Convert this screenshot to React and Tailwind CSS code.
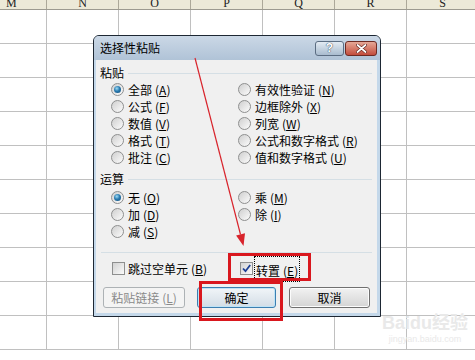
import React from "react";

const CJK = { fontFamily: '"Noto Sans CJK SC", "Noto Sans", sans-serif' };

const cols = [
  { w: 47, l: "M", left: true },
  { w: 72, l: "N" },
  { w: 72, l: "O" },
  { w: 72, l: "P" },
  { w: 72, l: "Q" },
  { w: 72, l: "R" },
  { w: 72, l: "S" },
];

function Sheet() {
  const rows = Array.from({ length: 10 });
  return (
    <div className="flex w-[475px] flex-col overflow-hidden">
      <div className="flex h-[10px] shrink-0 border-b border-[#9c9a90] bg-[#ece9d8]">
        {cols.map((c, i) => (
          <div
            key={i}
            style={{ width: c.w }}
            className={`flex shrink-0 items-end overflow-hidden border-r border-[#aca899] ${c.left ? "justify-start pl-[6px]" : "justify-center"}`}
          >
            <span className="text-[12px] leading-[11px] text-[#222]" style={{ fontFamily: '"Liberation Serif", serif' }}>
              {c.l}
            </span>
          </div>
        ))}
      </div>
      {rows.map((_, r) => (
        <div key={r} className="flex h-[34px] shrink-0 border-b border-[#c0c0c0]">
          {cols.map((c, i) => (
            <div key={i} style={{ width: c.w }} className="shrink-0 border-r border-[#c0c0c0]" />
          ))}
        </div>
      ))}
    </div>
  );
}

function Radio({ checked }) {
  return (
    <span className="flex h-[13px] w-[13px] shrink-0 items-center justify-center rounded-full border border-[#8e8f8f] bg-linear-to-br from-[#cfcfcf] to-[#fcfcfc]">
      {checked && (
        <span className="h-[7px] w-[7px] rounded-full bg-[radial-gradient(circle_at_40%_35%,#9edcf5_0%,#2a7bb0_45%,#0f4a78_100%)]" />
      )}
    </span>
  );
}

function Check({ checked }) {
  return (
    <span className="flex h-[13px] w-[13px] shrink-0 items-center justify-center border border-[#8e8f8f] bg-linear-to-br from-[#d2d2d2] to-[#fbfbfb]">
      {checked && (
        <svg width="11" height="11" viewBox="0 0 11 11">
          <path d="M2 5.5 L4.5 8.2 L9.2 2" fill="none" stroke="#1c3f95" strokeWidth="1.8" />
        </svg>
      )}
    </span>
  );
}

function Lab({ t, k }) {
  return (
    <span className="whitespace-nowrap text-[12px] leading-[14px] text-black">
      {t}
      <span className="ml-[3px]">
        (<span className="underline underline-offset-1">{k}</span>)
      </span>
    </span>
  );
}

function Opt({ t, k, checked }) {
  return (
    <div className="flex h-[17px] items-center gap-[4px]">
      <Radio checked={checked} />
      <Lab t={t} k={k} />
    </div>
  );
}

function GroupLabel({ t }) {
  return (
    <div className="flex items-center pl-[4px]">
      <span className="text-[12px] leading-[14px] text-black">{t}</span>
      <div className="ml-[4px] mr-[5px] h-px flex-1 bg-[#d5dfe5]" />
    </div>
  );
}

function Btn({ children, w, variant }) {
  const base = "flex h-[21px] items-center justify-center rounded-[3px] border text-[12px] leading-none";
  if (variant === "disabled")
    return (
      <div style={{ width: w }} className={`${base} border-[#adb2b5] bg-[#f4f4f4] text-[#8a8a8a]`}>
        {children}
      </div>
    );
  if (variant === "default")
    return (
      <div style={{ width: w }} className={`${base} border-[#3c7fb1] bg-linear-to-b from-[#f1f5f8] to-[#d3dde6] text-black shadow-[inset_0_0_0_1px_#bfe3f6]`}>
        {children}
      </div>
    );
  return (
    <div style={{ width: w }} className={`${base} border-[#707070] bg-linear-to-b from-[#f2f2f2] to-[#d4d4d4] text-black shadow-[inset_0_0_0_1px_#fcfcfc]`}>
      {children}
    </div>
  );
}

function Dialog() {
  return (
    <div
      className="absolute left-[93px] top-[35px] flex h-[282px] w-[288px] flex-col rounded-t-[6px] border border-[#1d2733] bg-[#c4d8ea]"
      style={CJK}
    >
      <div className="flex h-[24px] shrink-0 items-center justify-between rounded-t-[5px] bg-linear-to-b from-[#cbd8e6] to-[#b0c3d7] pl-[6px] pr-[3px]">
        <span className="text-[12px] leading-none text-black">选择性粘贴</span>
        <div className="flex items-center gap-[1px]">
          <div className="flex h-[15px] w-[29px] items-center justify-center rounded-[3px] border border-[#5b6d82] bg-linear-to-b from-[#e3ebf3] to-[#a9bccf]">
            <span className="text-[12px] font-bold leading-none text-white [text-shadow:0_0_1px_#3a4a5c,0_0_1px_#3a4a5c]" style={{ fontFamily: '"Liberation Sans", sans-serif' }}>
              ?
            </span>
          </div>
          <div className="flex h-[15px] w-[32px] items-center justify-center rounded-[3px] border border-[#6e2a22] bg-linear-to-b from-[#e5a796] to-[#c24b3c]">
            <svg width="11" height="9" viewBox="0 0 11 9">
              <path d="M1.5 1 L9.5 8 M9.5 1 L1.5 8" stroke="#5a1d16" strokeWidth="3" strokeLinecap="round" />
              <path d="M1.5 1 L9.5 8 M9.5 1 L1.5 8" stroke="#ffffff" strokeWidth="1.8" strokeLinecap="round" />
            </svg>
          </div>
        </div>
      </div>
      <div className="mb-[3px] ml-[2px] mr-[3px] flex flex-1 flex-col bg-[#f0f0f0]">
        <div className="mt-[6px]">
          <GroupLabel t="粘贴" />
        </div>
        <div className="mt-[1px] flex pl-[15px]">
          <div className="flex w-[127px] flex-col">
            <Opt t="全部" k="A" checked />
            <Opt t="公式" k="F" />
            <Opt t="数值" k="V" />
            <Opt t="格式" k="T" />
            <Opt t="批注" k="C" />
          </div>
          <div className="flex flex-col">
            <Opt t="有效性验证" k="N" />
            <Opt t="边框除外" k="X" />
            <Opt t="列宽" k="W" />
            <Opt t="公式和数字格式" k="R" />
            <Opt t="值和数字格式" k="U" />
          </div>
        </div>
        <div className="mt-[6px]">
          <GroupLabel t="运算" />
        </div>
        <div className="mt-[3px] flex pl-[15px]">
          <div className="flex w-[127px] flex-col">
            <Opt t="无" k="O" checked />
            <Opt t="加" k="D" />
            <Opt t="减" k="S" />
          </div>
          <div className="flex flex-col">
            <Opt t="乘" k="M" />
            <Opt t="除" k="I" />
          </div>
        </div>
        <div className="mx-[5px] mt-[12px] h-px bg-[#d5dfe5]" />
        <div className="mt-[7px] flex pl-[16px]">
          <div className="flex h-[17px] w-[128px] items-center gap-[3px]">
            <Check />
            <Lab t="跳过空单元" k="B" />
          </div>
          <div className="flex h-[17px] items-center gap-[1px]">
            <Check checked />
            <span className="border border-dotted border-black px-[1px]">
              <Lab t="转置" k="E" />
            </span>
          </div>
        </div>
        <div className="mt-[10px] flex pl-[7px]">
          <Btn w={82} variant="disabled">
            粘贴链接<span className="ml-[3px]">(<span className="underline">L</span>)</span>
          </Btn>
          <div className="ml-[12px]">
            <Btn w={79} variant="default">确定</Btn>
          </div>
          <div className="ml-[13px]">
            <Btn w={81}>取消</Btn>
          </div>
        </div>
      </div>
    </div>
  );
}

function Arrow() {
  return (
    <svg className="pointer-events-none absolute left-0 top-0" width="475" height="360" viewBox="0 0 475 360">
      <line x1="195" y1="58" x2="240.5" y2="234.5" stroke="#d8242c" strokeWidth="1.2" />
      <polygon points="243.5,246 245,233.3 236.1,235.5" fill="#d8242c" />
    </svg>
  );
}

export default function App() {
  return (
    <div className="relative h-[360px] w-[475px] overflow-hidden bg-white">
      <Sheet />
      <Dialog />
      <Arrow />
      <div className="pointer-events-none absolute left-[228px] top-[253px] h-[28px] w-[83px] border-[3px] border-[#d9171e]" />
      <div className="pointer-events-none absolute left-[199px] top-[281px] h-[40px] w-[84px] border-[3px] border-[#d9171e]" />
      <div className="pointer-events-none absolute left-[378px] top-[312px] flex w-[94px] flex-col items-center whitespace-nowrap text-[#e9e9e9]">
        <span className="text-[18px] font-bold leading-[22px]" style={{ fontFamily: '"Liberation Sans", "Noto Sans CJK SC", sans-serif' }}>
          Baidu经验
        </span>
        <span className="text-[9px] leading-[10px]" style={{ fontFamily: '"Liberation Sans", sans-serif' }}>
          jingyan.baidu.com
        </span>
      </div>
    </div>
  );
}
